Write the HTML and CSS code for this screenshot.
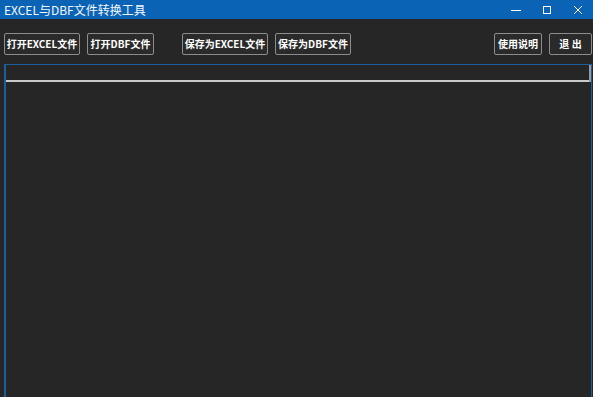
FILE: index.html
```html
<!DOCTYPE html>
<html>
<head>
<meta charset="utf-8">
<link rel="stylesheet" href="styles.css">
</head>
<body>
<div class="window">
  <div class="titlebar">
    <span class="title">EXCEL与DBF文件转换工具</span>
    <div class="controls">
      <span class="ctl"><svg width="10" height="10" viewBox="0 0 10 10"><path d="M0 5.5h10" stroke="#fff" stroke-width="1"/></svg></span>
      <span class="ctl"><svg width="10" height="10" viewBox="0 0 10 10"><rect x="1.5" y="1.5" width="7" height="7" fill="none" stroke="#fff" stroke-width="1"/></svg></span>
      <span class="ctl"><svg width="10" height="10" viewBox="0 0 10 10"><path d="M1 1L9 9M9 1L1 9" stroke="#fff" stroke-width="1"/></svg></span>
    </div>
  </div>
  <div class="toolbar">
    <div class="group">
      <button class="btn w76">打开EXCEL文件</button>
      <button class="btn w67">打开DBF文件</button>
    </div>
    <div class="group g2">
      <button class="btn w86">保存为EXCEL文件</button>
      <button class="btn w76">保存为DBF文件</button>
    </div>
    <div class="spacer"></div>
    <div class="group">
      <button class="btn w48">使用说明</button>
      <button class="btn w43">退 出</button>
    </div>
  </div>
  <div class="panel">
    <div class="header">
      <div class="hcell"></div>
      <div class="hend"></div>
    </div>
    <div class="body"></div>
  </div>
</div>
</body>
</html>
```
FILE: styles.css
```css
html, body {
  margin: 0;
  padding: 0;
  background: #262626;
  width: 593px;
  height: 397px;
  overflow: hidden;
  font-family: "Noto Sans CJK SC", "Noto Sans", sans-serif;
}
.window {
  display: flex;
  flex-direction: column;
  height: 397px;
}
.titlebar {
  height: 19px;
  background: #0b63b5;
  display: flex;
  align-items: center;
  justify-content: space-between;
  color: #fff;
}
.title {
  font-size: 12px;
  padding-left: 4px;
  line-height: 19px;
  font-family: "Noto Sans CJK SC", sans-serif;
  color: #f4f8fc;
}
.controls {
  display: flex;
  height: 19px;
}
.ctl {
  width: 31px;
  height: 19px;
  display: flex;
  align-items: center;
  justify-content: center;
}
.toolbar {
  display: flex;
  align-items: center;
  padding: 14px 1px 0 4px;
  height: 22px;
}
.group {
  display: flex;
  gap: 7px;
}
.g2 {
  margin-left: 28px;
}
.spacer {
  flex: 1;
}
.btn {
  height: 22px;
  box-sizing: border-box;
  border: 1px solid #8c8c8c;
  border-radius: 2px;
  background: #2a2a2a;
  color: #fff;
  font-family: "Noto Sans CJK SC", sans-serif;
  font-weight: bold;
  font-size: 10px;
  padding: 0;
  line-height: 20px;
  white-space: nowrap;
}
.w76 { width: 76px; }
.w67 { width: 67px; }
.w86 { width: 86px; }
.w48 { width: 48px; }
.w43 { width: 43px; }
.panel {
  margin: 9px 1px 0 4px;
  flex: 1;
  border: 1px solid #1d5f9e;
  border-left-width: 2px;
  border-bottom: none;
  display: flex;
  flex-direction: column;
}
.header {
  display: flex;
  height: 17px;
}
.hcell {
  flex: 1;
  border-bottom: 2px solid #c9c9c9;
  box-sizing: border-box;
}
.hend {
  width: 2px;
  background: #9a9a9a;
}
.body {
  flex: 1;
}
```
